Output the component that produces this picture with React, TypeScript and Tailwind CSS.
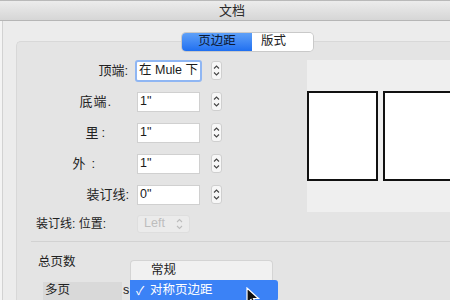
import React from 'react'

const font = { fontFamily: '"Liberation Sans", "Noto Sans CJK SC", sans-serif' }

function Stepper() {
  return (
    <div className="w-[11px] h-[19px] rounded-[3px] bg-[#f7f7f7] border border-[#cfcfcf] flex flex-col items-center justify-center">
      <svg width="7" height="13" viewBox="0 0 7 13">
        <path d="M1 4.5 L3.5 2 L6 4.5" fill="none" stroke="#444" strokeWidth="1.1" />
        <path d="M1 8.5 L3.5 11 L6 8.5" fill="none" stroke="#444" strokeWidth="1.1" />
      </svg>
    </div>
  )
}

interface FieldRowProps {
  label: React.ReactNode
  value: string
  labelPad: string
  focused?: boolean
}

function FieldRow({ label, value, labelPad, focused }: FieldRowProps) {
  return (
    <div className="flex items-center h-[20px]">
      <div className={`w-[113px] text-right text-[13px] text-[#222] ${labelPad}`}>{label}</div>
      <div
        className={
          focused
            ? 'ml-[5px] w-[67px] h-[22px] rounded-[3px] border-[2px] border-[#8fb6f3] bg-white flex items-center'
            : 'ml-[7px] w-[63px] h-[20px] bg-white border border-[#d0d0d0] flex items-center'
        }
      >
        <span className="pl-[2px] text-[12.5px] text-[#1a1a1a]">{value}</span>
      </div>
      <div className={focused ? 'ml-[9px]' : 'ml-[11px]'}>
        <Stepper />
      </div>
    </div>
  )
}

export default function App() {
  return (
    <div className="w-[450px] h-[300px] overflow-hidden bg-[#ececec] relative select-none" style={font}>
      {/* title bar */}
      <div className="h-[21px] border-t border-[#b9b9b9] border-b border-b-[#b6b6b6] bg-gradient-to-b from-[#ececec] to-[#d6d6d6] flex items-center justify-center">
        <span className="text-[13px] text-[#2a2a2a] pl-[14px]">文档</span>
      </div>

      <div className="flex h-[279px]">
        <div className="w-[3px] shrink-0 bg-[#f4f4f4] border-r border-[#d2d2d2]" />
        <div className="flex-1 min-w-0 pl-[13px] pt-[12px] flex flex-col">
          {/* tabs */}
          <div className="ml-[166px] flex h-[19px] relative z-10 -mb-[10px] rounded-[4px] shadow-[0_0_0_1px_#c9c9c9] w-[131px] overflow-hidden">
            <div className="w-[70px] bg-gradient-to-b from-[#5ea0f8] to-[#1f6ff0] flex items-center justify-center text-[12.5px] text-[#0d1a33]">
              页边距
            </div>
            <div className="flex-1 bg-white flex items-center pl-[9px] text-[12.5px] text-[#222]">版式</div>
          </div>

          {/* panel */}
          <div className="flex-1 bg-[#e4e4e4] rounded-tl-[5px] border-t border-l border-[#d8d8d8] flex flex-col">
            <div className="flex">
              <div className="w-[290px] shrink-0 pt-[19px] flex flex-col gap-[11px]">
                <FieldRow label="顶端:" value="在 Mule 下" labelPad="pr-[2px]" focused />
                <FieldRow label={<span className="tracking-[1px]">底端.</span>} value={'1"'} labelPad="pr-[18px]" />
                <FieldRow label={<span className="tracking-[3px]">里:</span>} value={'1"'} labelPad="pr-[22px]" />
                <FieldRow label={<span className="tracking-[6px]">外:</span>} value={'1"'} labelPad="pr-[29px]" />
                <FieldRow label="装订线:" value={'0"'} labelPad="pr-[1px]" />
                <div className="flex items-center h-[18px] mt-[-1px]">
                  <div className="w-[120px] pl-[19px] text-[12px] text-[#222]">装订线: 位置:</div>
                  <div className="w-[53px] h-[18px] rounded-[3px] bg-[#ebebeb] border border-[#dedede] flex items-center justify-between px-[6px]">
                    <span className="text-[12.5px] text-[#bdbdbd]">Left</span>
                    <svg width="7" height="12" viewBox="0 0 7 12">
                      <path d="M1 4 L3.5 1.5 L6 4" fill="none" stroke="#bcbcbc" strokeWidth="1.1" />
                      <path d="M1 8 L3.5 10.5 L6 8" fill="none" stroke="#bcbcbc" strokeWidth="1.1" />
                    </svg>
                  </div>
                </div>
              </div>
              {/* preview */}
              <div className="flex-1 min-w-0 mt-[18px] h-[152px] bg-[#efefef] flex gap-[5px] pt-[31px] overflow-hidden">
                <div className="w-[71px] h-[90px] shrink-0 bg-white border-2 border-[#111]" />
                <div className="w-[71px] h-[90px] shrink-0 bg-white border-2 border-[#111]" />
              </div>
            </div>

            <div className="ml-[14px] mt-[8px] border-t border-[#d2d2d2]" />
            <div className="pl-[21px] pt-[11px] text-[12.5px] text-[#222]">总页数</div>
            <div className="flex items-center mt-[10px] pl-[26px]">
              <div className="w-[79px] h-[18px] bg-[#d9d9d9] flex items-center pl-[2px]">
                <span className="text-[12.5px] text-[#222]">多页</span>
              </div>
              <span className="ml-[1px] text-[12.5px] text-[#222]">s</span>
            </div>
          </div>
        </div>
      </div>

      {/* popup menu */}
      <div className="absolute left-[130px] top-[260px] w-[148px]">
        <div className="w-[143px] h-[20px] bg-[#f1f1f1] rounded-t-[4px] border border-[#d4d4d4] border-b-0 flex items-center pl-[20px] text-[12.5px] text-[#222]">
          常规
        </div>
        <div className="h-[21px] bg-[#3b82f6] rounded-r-[3px] flex items-center text-[12.5px] text-white">
          <span className="w-[20px] text-center text-[12px]">✓</span>
          <span>对称页边距</span>
        </div>
      </div>

      {/* cursor */}
      <svg className="absolute left-[246px] top-[287px]" width="16" height="20" viewBox="0 0 16 20">
        <path d="M1 1 L1 16 L5 12.5 L8 19 L10.5 18 L7.5 11.5 L12.5 11.5 Z" fill="#111" stroke="#fff" strokeWidth="1.2" />
      </svg>
    </div>
  )
}
